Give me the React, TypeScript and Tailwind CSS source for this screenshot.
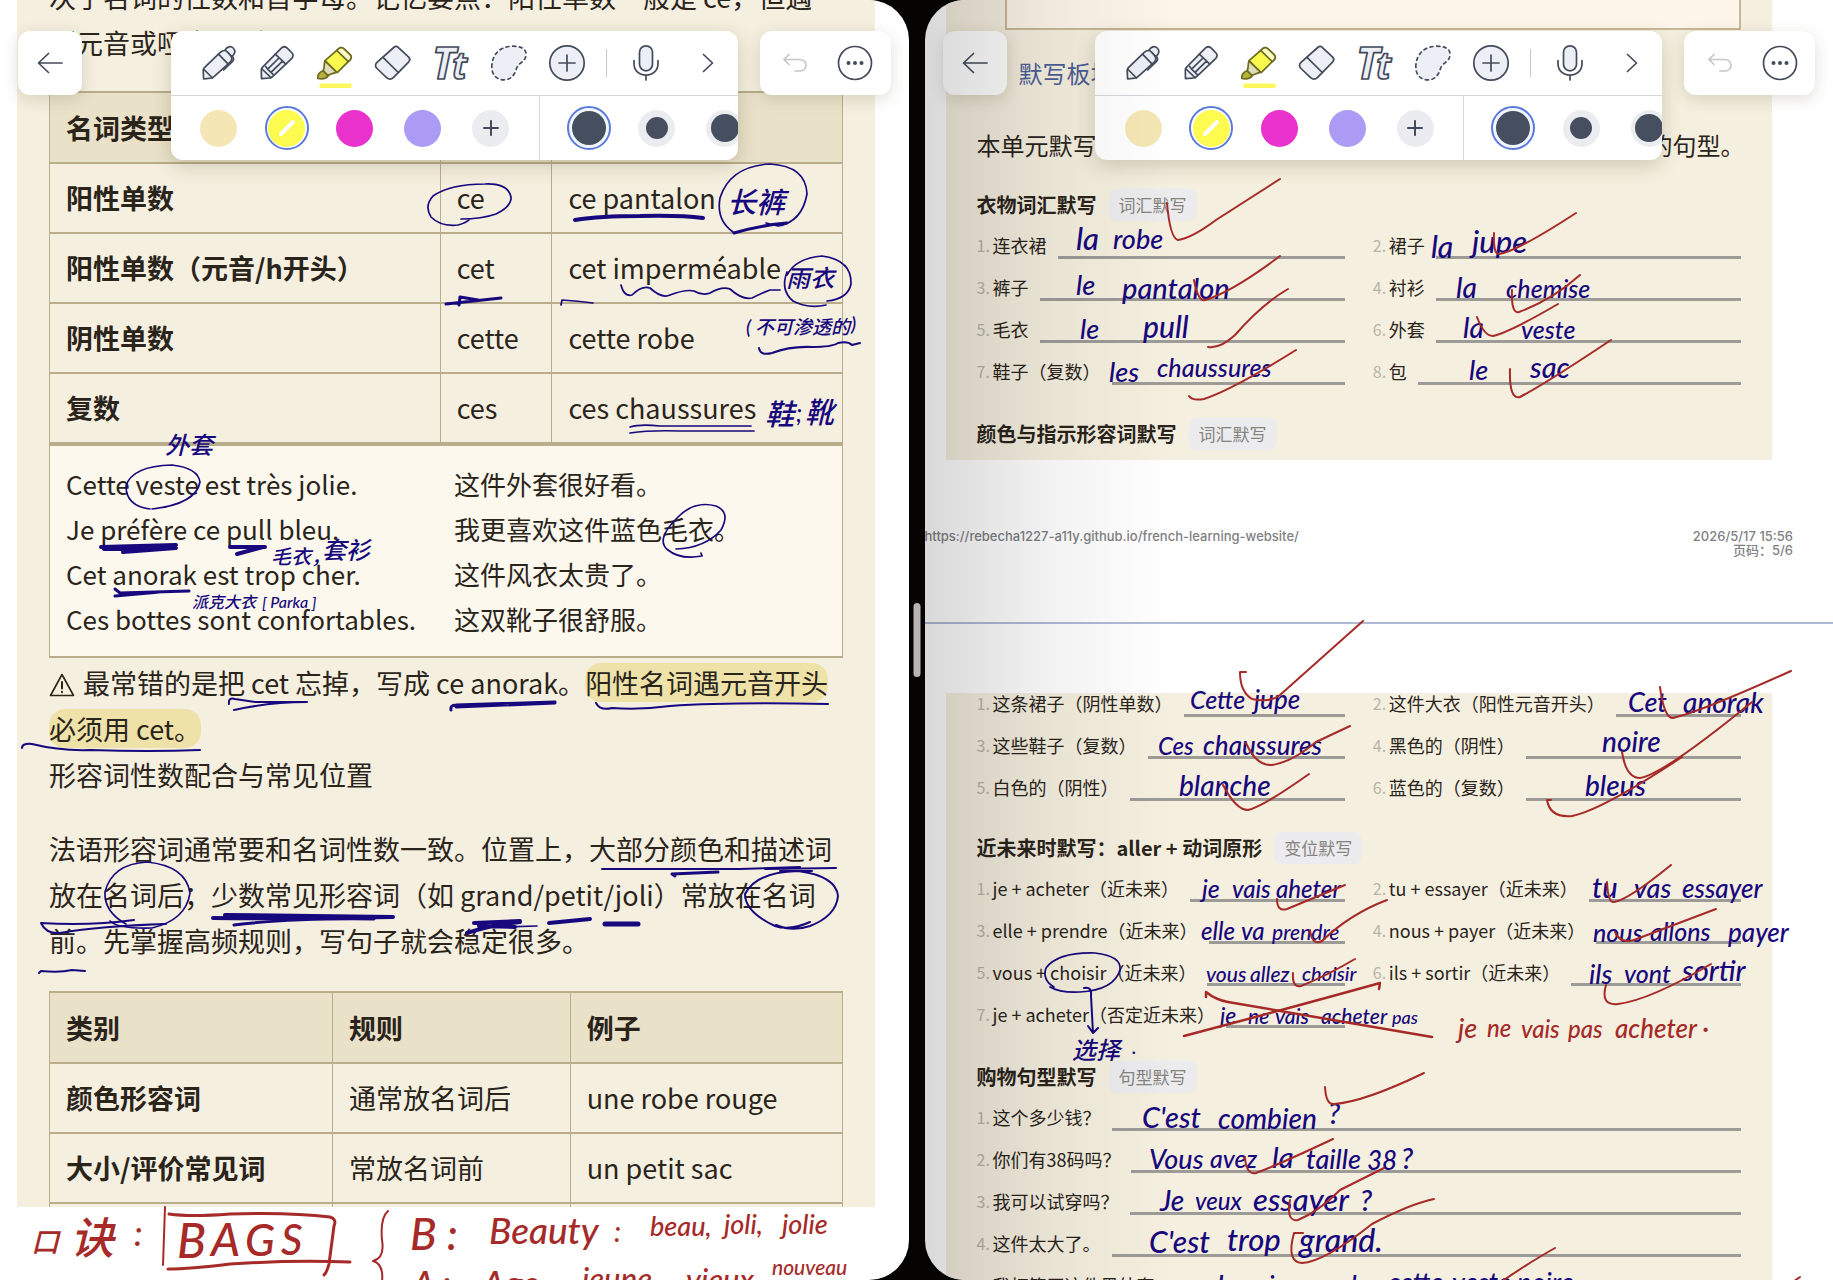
import React from 'react';

type Ink = 'blue' | 'red';

interface Stroke {
  d: string;
  width?: number;
  ink?: Ink;
}

interface Note {
  x: number;
  y: number;
  text: string;
  size?: number;
  ink?: Ink;
}

interface Question {
  label: string;
}

const inkColor = { blue: '#17087d', red: '#a52a28' };

const leftStrokes: Stroke[] = [
  { d: 'M461 219 Q482 219 496 214 Q512 206 511 197 Q508 183 485 184 Q450 184 433 196 Q424 206 431 217 Q441 227 458 225 Q466 223 470 219' },
  { d: 'M575 220 Q600 216 640 216 Q680 215 703 218', width: 4 },
  { d: 'M733 232 Q716 220 720 198 Q730 166 770 164 Q806 166 807 194 Q802 222 778 226 L766 223' },
  { d: 'M734 233 Q762 225 787 223', width: 3 },
  { d: 'M446 304 L501 298 M459 305 L460 297 L478 300', width: 3 },
  { d: 'M621 285 Q624 297 632 295 Q642 285 650 288 Q662 299 670 295 Q686 289 694 291 Q702 296 710 293 Q722 286 730 289 Q742 300 752 298 Q764 292 770 290 L780 290' },
  { d: 'M561 305 L562 300 Q578 301 593 303' },
  { d: 'M787 275 Q796 258 822 256 Q852 260 851 284 Q848 299 827 301 M787 272 Q780 290 793 301 Q808 309 826 305' },
  { d: 'M759 348 Q760 356 772 353 Q790 346 812 347 Q832 347 838 343 Q848 341 852 345 L860 343', width: 2 },
  { d: 'M630 427 Q640 424 660 426 L751 426 M630 433 Q650 430 680 431 L754 431' },
  { d: 'M150 509 Q126 506 126 486 Q132 466 172 465 Q198 468 200 482 Q196 504 152 509 L166 507' },
  { d: 'M101 547 L176 545 M104 549 L174 547 M123 552 L176 548', width: 4 },
  { d: 'M230 547 L265 547 M237 554 L263 547', width: 4 },
  { d: 'M115 589 L120 593 L189 591 M115 596 L160 592', width: 3 },
  { d: 'M676 549 Q705 548 721 530 Q731 512 716 506 Q694 500 677 518 Q655 540 668 550 Q680 560 702 556 L701 553' },
  { d: 'M229 704 Q228 697 235 699 L255 702 L307 702 Q270 702 234 710', width: 2 },
  { d: 'M451 710 Q450 705 456 705 L555 702 M456 707 L555 703', width: 3 },
  { d: 'M596 703 Q600 711 612 708 Q640 710 670 706 Q730 702 828 704', width: 2 },
  { d: 'M22 748 Q22 743 32 744 Q60 751 90 750 Q150 752 200 750', width: 2 },
  { d: 'M602 869 L740 869 L800 867 M765 869 L836 868 M780 871 L812 871', width: 2 },
  { d: 'M672 874 L675 876 M672 874 L718 872', width: 3 },
  { d: 'M126 924 Q104 912 105 892 Q112 864 147 862 Q186 866 190 893 Q186 920 152 928 Q118 929 110 921' },
  { d: 'M134 920 Q90 926 41 923 Q46 934 60 933 Q100 926 166 924 Q140 925 110 927', width: 2 },
  { d: 'M225 915 L393 917 M213 918 Q290 919 392 917', width: 4 },
  { d: 'M234 925 Q290 918 374 919', width: 3 },
  { d: 'M474 923 L520 921 M467 933 Q490 925 520 922 M479 926 L515 927', width: 4 },
  { d: 'M500 927 L537 926' },
  { d: 'M549 923 L590 919', width: 4 },
  { d: 'M605 924 L638 924', width: 5 },
  { d: 'M810 922 Q790 931 775 926 Q745 912 745 894 Q756 872 798 871 Q836 876 838 896 Q836 916 810 926 Q792 932 776 925', width: 2 },
  { d: 'M39 973 L41 971 Q60 973 72 970 L85 971', width: 2 },
  { d: 'M165 1207 L163 1265', width: 2, ink: 'red' },
  { d: 'M169 1214 Q190 1217 230 1214 Q290 1212 330 1217 Q337 1219 334 1226 L329 1264 Q327 1272 324 1275', width: 3, ink: 'red' },
  { d: 'M168 1269 Q190 1269 230 1264 Q290 1260 350 1262', width: 3, ink: 'red' },
  { d: 'M388 1211 Q380 1218 382 1240 Q385 1258 373 1261 Q384 1264 382 1282', width: 2, ink: 'red' },
];

const leftNotes: Note[] = [
  { x: 727, y: 213, text: '长裤', size: 29 },
  { x: 786, y: 287, text: '雨衣', size: 24 },
  { x: 746, y: 334, text: '(', size: 20 },
  { x: 755, y: 334, text: '不可渗透的', size: 19 },
  { x: 851, y: 331, text: ')', size: 20 },
  { x: 765, y: 425, text: '鞋', size: 29 },
  { x: 796, y: 422, text: ';', size: 24 },
  { x: 805, y: 423, text: '靴', size: 29 },
  { x: 165, y: 454, text: '外套', size: 24 },
  { x: 271, y: 564, text: '毛衣，', size: 20 },
  { x: 322, y: 559, text: '套衫', size: 24 },
  { x: 192, y: 608, text: '派克大衣', size: 16 },
  { x: 262, y: 608, text: '[ Parka ]', size: 16 },
  { x: 31, y: 1252, text: '口', size: 28, ink: 'red' },
  { x: 70, y: 1254, text: '诀', size: 44, ink: 'red' },
  { x: 134, y: 1246, text: ':', size: 34, ink: 'red' },
  { x: 177, y: 1258, text: 'B', size: 48, ink: 'red' },
  { x: 211, y: 1256, text: 'A', size: 46, ink: 'red' },
  { x: 245, y: 1256, text: 'G', size: 44, ink: 'red' },
  { x: 281, y: 1255, text: 'S', size: 42, ink: 'red' },
  { x: 410, y: 1250, text: 'B :', size: 44, ink: 'red' },
  { x: 489, y: 1244, text: 'Beauty', size: 37, ink: 'red' },
  { x: 614, y: 1242, text: ':', size: 28, ink: 'red' },
  { x: 650, y: 1236, text: 'beau,', size: 27, ink: 'red' },
  { x: 724, y: 1234, text: 'joli,', size: 27, ink: 'red' },
  { x: 782, y: 1234, text: 'jolie', size: 27, ink: 'red' },
  { x: 412, y: 1297, text: 'A :', size: 36, ink: 'red' },
  { x: 482, y: 1297, text: 'Age', size: 36, ink: 'red' },
  { x: 582, y: 1290, text: 'jeune', size: 31, ink: 'red' },
  { x: 686, y: 1291, text: 'vieux', size: 31, ink: 'red' },
  { x: 772, y: 1275, text: 'nouveau', size: 21, ink: 'red' },
];

const rightStrokes: Stroke[] = [
  { d: 'M1167 203 Q1170 238 1178 240 Q1192 238 1216 220 L1280 179', width: 2, ink: 'red' },
  { d: 'M1494 233 Q1493 254 1499 254 Q1516 252 1576 213', width: 2, ink: 'red' },
  { d: 'M1194 280 Q1198 302 1205 300 Q1232 292 1280 256', width: 2, ink: 'red' },
  { d: 'M1512 290 Q1511 314 1519 312 Q1552 300 1580 275', width: 2, ink: 'red' },
  { d: 'M1208 347 Q1220 349 1235 335 Q1262 304 1288 289', width: 2, ink: 'red' },
  { d: 'M1477 317 Q1484 336 1493 336 Q1510 332 1558 304', width: 2, ink: 'red' },
  { d: 'M1189 396 Q1192 401 1204 399 Q1232 390 1296 350', width: 2, ink: 'red' },
  { d: 'M1510 369 Q1509 400 1520 397 Q1545 384 1611 340', width: 2, ink: 'red' },
  { d: 'M1246 672 L1240 672 Q1240 692 1252 699 Q1270 703 1280 695 L1363 621', width: 2, ink: 'red' },
  { d: 'M1660 687 Q1664 718 1673 718 Q1700 712 1791 671', width: 2, ink: 'red' },
  { d: 'M1246 743 Q1256 766 1272 765 Q1292 762 1316 742 L1350 726', width: 2, ink: 'red' },
  { d: 'M1622 752 Q1626 778 1640 778 Q1664 774 1752 702', width: 2, ink: 'red' },
  { d: 'M1223 785 Q1236 810 1248 810 Q1264 806 1309 774', width: 2, ink: 'red' },
  { d: 'M1551 800 L1547 800 Q1550 818 1572 816 Q1602 810 1682 757', width: 2, ink: 'red' },
  { d: 'M1277 899 Q1277 912 1287 909 L1345 885', width: 2, ink: 'red' },
  { d: 'M1607 882 Q1608 903 1614 902 Q1628 900 1671 865', width: 2, ink: 'red' },
  { d: 'M1310 930 Q1312 946 1322 941 Q1350 914 1387 900', width: 2, ink: 'red' },
  { d: 'M1615 932 Q1620 944 1634 940 L1716 909', width: 2, ink: 'red' },
  { d: 'M1293 973 Q1292 988 1301 986 Q1326 976 1355 959', width: 2, ink: 'red' },
  { d: 'M1606 985 Q1600 1006 1618 1004 Q1650 1000 1711 964', width: 2, ink: 'red' },
  { d: 'M1184 1036 Q1290 1008 1380 983 L1379 989', width: 2.5, ink: 'red' },
  { d: 'M1206 997 L1206 992 Q1216 1000 1228 1002 L1432 1037', width: 2.5, ink: 'red' },
  { d: 'M1325 1087 Q1326 1105 1334 1104 Q1364 1102 1424 1073', width: 2, ink: 'red' },
  { d: 'M1245 1157 Q1246 1175 1256 1173 Q1280 1164 1333 1139', width: 2, ink: 'red' },
  { d: 'M1290 1200 Q1286 1222 1298 1220 Q1318 1212 1340 1190 L1384 1168', width: 2, ink: 'red' },
  { d: 'M1303 1233 L1294 1233 Q1286 1262 1302 1263 Q1324 1262 1372 1224 Q1410 1204 1434 1199', width: 2, ink: 'red' },
  { d: 'M1498 1284 Q1530 1262 1555 1248', width: 2, ink: 'red' },
  { d: 'M1790 1284 L1800 1277', width: 2, ink: 'red' },
  { d: 'M1054 987 Q1042 980 1046 968 Q1058 952 1095 953 Q1122 956 1120 970 Q1114 990 1080 992 Q1060 993 1050 987' },
  { d: 'M1084 988 Q1092 986 1091 996 L1093 1033 M1088 1026 L1093 1033 L1098 1028', width: 2 },
];

const rightNotes: Note[] = [
  { x: 1076, y: 250, text: 'la', size: 31 },
  { x: 1113, y: 249, text: 'robe', size: 27 },
  { x: 1431, y: 258, text: 'la', size: 30 },
  { x: 1472, y: 253, text: 'jupe', size: 31 },
  { x: 1076, y: 295, text: 'le', size: 27 },
  { x: 1122, y: 299, text: 'pantalon', size: 29 },
  { x: 1456, y: 298, text: 'la', size: 28 },
  { x: 1506, y: 298, text: 'chemise', size: 25 },
  { x: 1080, y: 339, text: 'le', size: 27 },
  { x: 1143, y: 338, text: 'pull', size: 30 },
  { x: 1463, y: 338, text: 'la', size: 28 },
  { x: 1521, y: 339, text: 'veste', size: 25 },
  { x: 1109, y: 382, text: 'les', size: 27 },
  { x: 1157, y: 377, text: 'chaussures', size: 25 },
  { x: 1469, y: 380, text: 'le', size: 27 },
  { x: 1530, y: 378, text: 'sac', size: 29 },
  { x: 1190, y: 709, text: 'Cette', size: 25 },
  { x: 1254, y: 709, text: 'jupe', size: 26 },
  { x: 1628, y: 712, text: 'Cet', size: 27 },
  { x: 1683, y: 713, text: 'anorak', size: 28 },
  { x: 1158, y: 755, text: 'Ces', size: 24 },
  { x: 1203, y: 755, text: 'chaussures', size: 26 },
  { x: 1602, y: 752, text: 'noire', size: 28 },
  { x: 1179, y: 796, text: 'blanche', size: 28 },
  { x: 1585, y: 796, text: 'bleus', size: 28 },
  { x: 1202, y: 898, text: 'je', size: 25 },
  { x: 1232, y: 898, text: 'vais', size: 24 },
  { x: 1276, y: 898, text: 'aheter', size: 24 },
  { x: 1592, y: 898, text: 'tu', size: 29 },
  { x: 1634, y: 898, text: 'vas', size: 27 },
  { x: 1682, y: 898, text: 'essayer', size: 26 },
  { x: 1201, y: 940, text: 'elle', size: 24 },
  { x: 1241, y: 940, text: 'va', size: 24 },
  { x: 1272, y: 940, text: 'prendre', size: 21 },
  { x: 1593, y: 942, text: 'nous', size: 25 },
  { x: 1650, y: 941, text: 'allons', size: 25 },
  { x: 1728, y: 942, text: 'payer', size: 26 },
  { x: 1206, y: 982, text: 'vous', size: 21 },
  { x: 1250, y: 982, text: 'allez', size: 21 },
  { x: 1302, y: 981, text: 'choisir', size: 20 },
  { x: 1589, y: 984, text: 'ils', size: 27 },
  { x: 1624, y: 983, text: 'vont', size: 25 },
  { x: 1682, y: 981, text: 'sortir', size: 29 },
  { x: 1220, y: 1024, text: 'je', size: 23 },
  { x: 1248, y: 1024, text: 'ne', size: 21 },
  { x: 1275, y: 1024, text: 'vais', size: 21 },
  { x: 1321, y: 1024, text: 'acheter', size: 21 },
  { x: 1392, y: 1024, text: 'pas', size: 18 },
  { x: 1458, y: 1038, text: 'je', size: 27, ink: 'red' },
  { x: 1487, y: 1037, text: 'ne', size: 24, ink: 'red' },
  { x: 1521, y: 1038, text: 'vais', size: 24, ink: 'red' },
  { x: 1568, y: 1038, text: 'pas', size: 24, ink: 'red' },
  { x: 1615, y: 1038, text: 'acheter ·', size: 26, ink: 'red' },
  { x: 1072, y: 1059, text: '选择', size: 24 },
  { x: 1132, y: 1054, text: '.', size: 20 },
  { x: 1142, y: 1128, text: "C'est", size: 29 },
  { x: 1218, y: 1129, text: 'combien', size: 28 },
  { x: 1328, y: 1124, text: '?', size: 29 },
  { x: 1149, y: 1169, text: 'Vous', size: 27 },
  { x: 1210, y: 1168, text: 'avez', size: 25 },
  { x: 1272, y: 1168, text: 'la', size: 29 },
  { x: 1306, y: 1169, text: 'taille', size: 27 },
  { x: 1367, y: 1170, text: '38', size: 26 },
  { x: 1401, y: 1169, text: '?', size: 29 },
  { x: 1160, y: 1211, text: 'Je', size: 28 },
  { x: 1195, y: 1210, text: 'veux', size: 24 },
  { x: 1253, y: 1211, text: 'essayer', size: 31 },
  { x: 1360, y: 1211, text: '?', size: 29 },
  { x: 1149, y: 1253, text: "C'est", size: 30 },
  { x: 1227, y: 1251, text: 'trop', size: 31 },
  { x: 1299, y: 1252, text: 'grand.', size: 32 },
  { x: 1213, y: 1295, text: 'Je vais prendre', size: 27 },
  { x: 1388, y: 1292, text: 'cette', size: 27 },
  { x: 1452, y: 1292, text: 'veste noire.', size: 27 },
];

const InkLayer: React.FC<{ originX: number; strokes: Stroke[]; notes: Note[] }> = ({ originX, strokes, notes }) => (
  <svg
    className="pointer-events-none absolute top-0 left-0"
    width={908}
    height={1280}
    viewBox={`${originX} 0 908 1280`}
    fill="none"
    strokeLinecap="round"
    strokeLinejoin="round"
  >
    {notes.map((n, i) => (
      <text
        key={`n${i}`}
        x={n.x}
        y={n.y}
        fontSize={n.size ?? 25}
        fill={inkColor[n.ink ?? 'blue']}
        className="font-['Lato','Noto_Sans_CJK_SC',sans-serif] font-medium italic"
      >
        {n.text}
      </text>
    ))}
    {strokes.map((s, i) => (
      <path key={`s${i}`} d={s.d} stroke={inkColor[s.ink ?? 'blue']} strokeWidth={s.width ?? 1.7} />
    ))}
  </svg>
);

/* ---------- toolbar icons, all on a 36px grid ---------- */

const Icon: React.FC<{ children: React.ReactNode }> = ({ children }) => (
  <svg
    className="size-9 overflow-visible"
    viewBox="0 0 36 36"
    fill="#eceff5"
    stroke="#434b5b"
    strokeWidth="1.7"
    strokeLinecap="round"
    strokeLinejoin="round"
  >
    {children}
  </svg>
);

const PenIcon = () => (
  <Icon>
    <path d="M24 5.2c2-3.6 5.6-4.6 8.2-2.2 2.8 2.6 2 6-1.6 8.6Z" />
    <path d="M2.6 34 2.2 25.5c0-1.3.4-2 1.2-2.8L19.5 7.2c2.6-2.3 5-2.3 7 0l3 3.2c2 2.4 1.900 4.400-.3 6.800L13 31.600c-1 .9-2 1.400-3.300 1.600Z" />
    <path d="M3 24.500 11.500 33M17.500 9.200l9.700 10" fill="none" />
    <path d="M31.500 11.500c1.600 2 1.400 3.600-.2 5.200L22.700 25" fill="none" />
  </Icon>
);

const PencilIcon = () => (
  <Icon>
    <path d="M2.500 33.700 2.300 25c0-1 .3-1.900 1.100-2.700L22.300 3.200c2-1.900 4.100-1.900 6 0l4.300 4.300c2 2 2 4.100 0 6.100L13.600 31.700c-.8.8-1.700 1.200-2.700 1.300Z" />
    <path d="M3 24l9 8.600M16.300 9.200l10.500 10M20 13 8.600 24.200M23.500 16.200 12 27.400M8.600 24.200l3.400 3.200M6.700 21.500l2 2.700M12 27.400l2.400 2.500" fill="none" />
  </Icon>
);

const HighlighterIcon = () => (
  <Icon>
    <path d="M.8 33.500c-.3-3.500 1.600-6.500 5.200-7.800l5.200 4.800c-1.700 3.300-5.600 3.800-10.400 3Z" fill="#b5b23c" stroke="#6d6b22" />
    <path d="M6.200 25.600C8 22 6.500 19.500 8 16l11.500 11c-3 2.200-6 1-8.400 3.600Z" fill="#dedcbc" stroke="#6d6b22" />
    <path d="M8 15.600 21.500 3.800c2-1.700 3.700-1.700 5.500 0l6 5.800c1.800 1.800 1.700 3.500 0 5.300L20.200 27.700Z" fill="#fafa4e" stroke="#6d6b22" />
    <path d="M21.500 3.800c2-1.700 3.700-1.700 5.500 0l6 5.800c1.800 1.800 1.700 3.500 0 5.300l-1.700 1.700L19.700 5.400Z" fill="#fdfdc4" stroke="#6d6b22" />
    <rect x="2.500" y="38.500" width="32" height="4.500" fill="#fbf75c" stroke="none" />
  </Icon>
);

const EraserIcon = () => (
  <Icon>
    <path d="M2 17.400 18.700 2.500c1.700-1.400 3.300-1.400 4.800.1l10.200 9.600c1.500 1.500 1.500 3 .1 4.600L18.600 32.300c-2.200 2.200-4.800 2.300-7 .3L2 23.500c-2-2-2-4.200 0-6.100Z" />
    <path d="m8 12.300 15.300 15.200" fill="none" />
  </Icon>
);

const TextIcon = () => (
  <Icon>
    <text x="-1" y="34" fontSize="44" strokeWidth="1.700" className="font-['Open_Sans',sans-serif] font-bold italic">
      T
    </text>
    <text x="19" y="34" fontSize="37" strokeWidth="1.700" className="font-['Open_Sans',sans-serif] font-bold italic">
      t
    </text>
  </Icon>
);

const LassoIcon = () => (
  <Icon>
    <path
      d="M.8 22C.8 9.500 9 1.200 22 1.200c8 0 13 2.500 13 8 0 7.800-7 7.800-9.500 14.300C23.500 30 20 34.800 13 34.800 5.500 34.800.8 30 .8 22Z"
      strokeDasharray="3 3.600"
    />
  </Icon>
);

const PlusIcon = () => (
  <Icon>
    <circle cx="18" cy="18" r="17.200" />
    <path d="M18 10v16M10 18h16" />
  </Icon>
);

const MicIcon = () => (
  <Icon>
    <rect x="11.500" y=".8" width="13" height="25" rx="6.500" />
    <path d="M6 15.500v3c0 7 5 11.700 12 11.700s12-4.700 12-11.700v-3M18 30.500v4.500" fill="none" />
  </Icon>
);

const ChevronIcon = () => (
  <Icon>
    <path d="m13.500 9.500 9 8.500-9 8.500" fill="none" />
  </Icon>
);

const BackIcon = () => (
  <Icon>
    <path d="M30 18H7M16.500 8.500 6.500 18l10 9.500" fill="none" />
  </Icon>
);

const UndoIcon = () => (
  <Icon>
    <path d="M12 9.500 7 14.500l5 5M7 14.500h15c4.500 0 7 2.400 7 5.700S26.500 26 22.500 26H18" fill="none" stroke="#c6c6cb" />
  </Icon>
);

const MoreIcon = () => (
  <Icon>
    <circle cx="18" cy="18" r="16.500" fill="#fff" />
    <g fill="#434b5b" stroke="none">
      <circle cx="11.500" cy="18" r="2" />
      <circle cx="18" cy="18" r="2" />
      <circle cx="24.500" cy="18" r="2" />
    </g>
  </Icon>
);

const tools = [
  { name: 'Pen', icon: PenIcon },
  { name: 'Pencil', icon: PencilIcon },
  { name: 'Highlighter', icon: HighlighterIcon },
  { name: 'Eraser', icon: EraserIcon },
  { name: 'Text', icon: TextIcon },
  { name: 'Lasso', icon: LassoIcon },
  { name: 'Insert', icon: PlusIcon },
];

const Toolbar: React.FC = () => (
  <header className="absolute inset-x-0 top-[31px] grid grid-cols-[1fr_567px_1fr] items-start px-[18px]">
    <button aria-label="Back" className="flex size-16 items-center justify-center rounded-xl bg-white shadow-[0_4px_16px_rgba(60,50,20,0.16)]">
      <BackIcon />
    </button>

    <div className="overflow-hidden rounded-xl bg-white shadow-[0_6px_20px_rgba(60,50,20,0.2)]">
      <div className="flex h-[65px] items-center border-b border-[#d5d5db] pl-[30px]">
        <div className="flex gap-[22px]">
          {tools.map(({ name, icon: ToolIcon }) => (
            <button key={name} aria-label={name}>
              <ToolIcon />
            </button>
          ))}
        </div>
        <div className="mx-[21px] h-7 w-px bg-[#c4c7ce]" />
        <div className="flex gap-[26px]">
          <button aria-label="Record">
            <MicIcon />
          </button>
          <button aria-label="More tools">
            <ChevronIcon />
          </button>
        </div>
      </div>

      <div className="flex h-16">
        <div className="flex w-[368px] shrink-0 items-center gap-6 pl-[26px]">
          <button aria-label="Cream" className="flex size-11 items-center justify-center">
            <span className="size-[37px] rounded-full bg-[#f5e7b5]" />
          </button>
          <button aria-label="Yellow" className="flex size-11 items-center justify-center rounded-full border-2 border-[#5c79dc]">
            <span className="flex size-[37px] items-center justify-center rounded-full bg-[#fdfb4f]">
              <svg className="size-5" viewBox="0 0 20 20" stroke="#fff" strokeWidth="4" strokeLinecap="round">
                <path d="M4 16 16 4" />
              </svg>
            </span>
          </button>
          <button aria-label="Magenta" className="flex size-11 items-center justify-center">
            <span className="size-[37px] rounded-full bg-[#e832cb]" />
          </button>
          <button aria-label="Lavender" className="flex size-11 items-center justify-center">
            <span className="size-[37px] rounded-full bg-[#ab9bf5]" />
          </button>
          <button aria-label="Add colour" className="flex size-11 items-center justify-center">
            <span className="flex size-[37px] items-center justify-center rounded-full bg-[#ebecef]">
              <svg className="size-4" viewBox="0 0 16 16" stroke="#434b5b" strokeWidth="2" strokeLinecap="round">
                <path d="M8 1v14M1 8h14" />
              </svg>
            </span>
          </button>
        </div>
        <div className="flex items-center gap-6 border-l border-[#d5d5db] pl-[27px]">
          <button aria-label="Thick" className="flex size-11 shrink-0 items-center justify-center rounded-full border-2 border-[#5c79dc] bg-[#f1f5fd]">
            <span className="size-[34px] rounded-full bg-[#454f5f]" />
          </button>
          <button aria-label="Thin" className="flex size-11 shrink-0 items-center justify-center">
            <span className="flex size-[37px] items-center justify-center rounded-full bg-[#ebecef]">
              <span className="size-[22px] rounded-full bg-[#454f5f]" />
            </span>
          </button>
          <button aria-label="Medium" className="flex size-11 shrink-0 items-center justify-center">
            <span className="flex size-[37px] items-center justify-center rounded-full bg-[#ebecef]">
              <span className="size-7 rounded-full bg-[#454f5f]" />
            </span>
          </button>
        </div>
      </div>
    </div>

    <div className="flex h-16 w-[131px] items-center justify-center gap-6 justify-self-end rounded-xl bg-white shadow-[0_4px_16px_rgba(60,50,20,0.16)]">
      <button aria-label="Undo">
        <UndoIcon />
      </button>
      <button aria-label="Options">
        <MoreIcon />
      </button>
    </div>
  </header>
);

/* ---------- left page ---------- */

const cell = 'border-x border-y-2 border-[#b9ad8c] pl-4 text-left';

const LeftPage: React.FC = () => (
  <main className="mr-[34px] ml-[17px] h-[1207px] overflow-hidden bg-[#f5efdf] px-8 text-[27px] leading-[46px] text-[#2a241b]">
    <p className="-mt-[26px]">
      次于名词的性数和首字母。记忆要点：阳性单数一般是 ce，但遇
      <br />
      到元音或哑音 h 时用 cet。
    </p>

    <table className="mt-[25px] w-full table-fixed border-collapse">
      <colgroup>
        <col className="w-[49.3%]" />
        <col className="w-[14.1%]" />
        <col />
      </colgroup>
      <thead>
        <tr className="h-[71px] bg-[#e9e1c8]">
          <th className={cell}>名词类型</th>
          <th className={cell}>形式</th>
          <th className={cell}>例子</th>
        </tr>
      </thead>
      <tbody>
        {[
          ['阳性单数', 'ce', 'ce pantalon'],
          ['阳性单数（元音/h开头）', 'cet', 'cet imperméable'],
          ['阴性单数', 'cette', 'cette robe'],
          ['复数', 'ces', 'ces chaussures'],
        ].map(([type, form, example]) => (
          <tr key={type} className="h-[70px]">
            <th className={cell}>{type}</th>
            <td className={cell}>{form}</td>
            <td className={cell}>{example}</td>
          </tr>
        ))}
      </tbody>
    </table>

    <dl className="grid grid-cols-[388px_1fr] border-x border-y-2 border-[#b9ad8c] bg-[#fcf8ed] pt-[15px] pr-4 pb-[15px] pl-4 text-[26px] leading-[45px]">
      <dt>Cette veste est très jolie.</dt>
      <dd>这件外套很好看。</dd>
      <dt>Je préfère ce pull bleu.</dt>
      <dd>我更喜欢这件蓝色毛衣。</dd>
      <dt>Cet anorak est trop cher.</dt>
      <dd>这件风衣太贵了。</dd>
      <dt>Ces bottes sont confortables.</dt>
      <dd>这双靴子很舒服。</dd>
    </dl>

    <p className="mt-[2px]">
      <svg className="mr-2 inline size-[26px] -translate-y-[2px]" viewBox="0 0 26 26" fill="none" stroke="#2a241b" strokeWidth="1.600" strokeLinejoin="round" strokeLinecap="round">
        <path d="M13 2.500 24.500 23.500h-23Z" />
        <path d="M13 10v6.500M13 19.800v.4" strokeWidth="2" />
      </svg>
      最常错的是把 cet 忘掉，写成 ce anorak。
      <mark className="rounded-2xl bg-[#efe2a9] box-decoration-clone text-inherit">阳性名词遇元音开头必须用 cet。</mark>
    </p>
    <p>形容词性数配合与常见位置</p>
    <p className="mt-7">
      法语形容词通常要和名词性数一致。位置上，大部分颜色和描述词放在名词后；少数常见形容词（如 grand/petit/joli）常放在名词前。先掌握高频规则，写句子就会稳定很多。
    </p>

    <table className="mt-[27px] w-full table-fixed border-collapse">
      <colgroup>
        <col className="w-[35.7%]" />
        <col className="w-[30%]" />
        <col />
      </colgroup>
      <thead>
        <tr className="h-[71px] bg-[#e9e1c8]">
          <th className={cell}>类别</th>
          <th className={cell}>规则</th>
          <th className={cell}>例子</th>
        </tr>
      </thead>
      <tbody>
        {[
          ['颜色形容词', '通常放名词后', 'une robe rouge'],
          ['大小/评价常见词', '常放名词前', 'un petit sac'],
          ['', '', ''],
        ].map(([kind, rule, example], i) => (
          <tr key={i} className="h-[70px]">
            <th className={cell}>{kind}</th>
            <td className={cell}>{rule}</td>
            <td className={cell}>{example}</td>
          </tr>
        ))}
      </tbody>
    </table>
  </main>
);

/* ---------- right page ---------- */

const SectionTitle: React.FC<{ title: string; tag: string }> = ({ title, tag }) => (
  <div className="flex h-8 items-center gap-3">
    <h3 className="text-[20px] leading-8 font-bold">{title}</h3>
    <span className="rounded-lg bg-[#ececee] px-[10px] text-[17px] leading-8 text-[#85837f]">{tag}</span>
  </div>
);

const QuestionList: React.FC<{ items: Question[]; single?: boolean }> = ({ items, single }) => (
  <ol className={single ? '-mt-1 grid grid-cols-1' : '-mt-1 grid grid-cols-2 gap-x-7'}>
    {items.map((q, i) => (
      <li key={q.label} className="flex h-[42px] items-end text-[18px] leading-[27px] whitespace-nowrap">
        <span className="w-4 shrink-0 text-[16px] text-[#b9b4a8]">{i + 1}.</span>
        <span>{q.label}</span>
        <span className="ml-[11px] h-7 flex-1 border-b-[3px] border-[#9c9b98]" />
      </li>
    ))}
  </ol>
);

const toQuestions = (...labels: string[]): Question[] => labels.map((label) => ({ label }));

const RightPage: React.FC = () => (
  <main className="text-[#2a241b]">
    <section className="mr-[61px] ml-[21px] h-[460px] overflow-hidden bg-[#f5efdf] px-[31px]">
      <div className="ml-7 h-[30px] border-x-2 border-b-2 border-[#c9b896] bg-[#fdf5e9]" />
      <h2 className="mt-[25px] ml-[42px] text-[24px] leading-9 text-[#4c6096]">默写板块</h2>
      <p className="mt-[34px] text-[24px] leading-10 whitespace-nowrap">本单元默写覆盖衣物、颜色、指示形容词、近未来时和购物场景的句型。</p>
      <div className="mt-6">
        <SectionTitle title="衣物词汇默写" tag="词汇默写" />
        <QuestionList items={toQuestions('连衣裙', '裙子', '裤子', '衬衫', '毛衣', '外套', '鞋子（复数）', '包')} />
      </div>
      <div className="mt-[33px]">
        <SectionTitle title="颜色与指示形容词默写" tag="词汇默写" />
      </div>
    </section>

    <footer className="mt-[69px] flex h-[95px] justify-between border-b-2 border-[#b1bad4] pr-10 font-['Inter','Noto_Sans_CJK_SC',sans-serif] text-[13px] leading-[14px] font-medium text-[#808083]">
      <span>https://rebecha1227-a11y.github.io/french-learning-website/</span>
      <span className="text-right">
        2026/5/17 15:56
        <br />
        页码：5/6
      </span>
    </footer>

    <section className="mt-[69px] mr-[61px] ml-[21px] flow-root bg-[#f5efdf] px-[31px]">
      <div className="-mt-[18px]">
        <QuestionList
          items={toQuestions('这条裙子（阴性单数）', '这件大衣（阳性元音开头）', '这些鞋子（复数）', '黑色的（阴性）', '白色的（阴性）', '蓝色的（复数）')}
        />
      </div>
      <div className="mt-[31px]">
        <SectionTitle title="近未来时默写：aller + 动词原形" tag="变位默写" />
        <QuestionList
          items={toQuestions(
            'je + acheter（近未来）',
            'tu + essayer（近未来）',
            'elle + prendre（近未来）',
            'nous + payer（近未来）',
            'vous + choisir（近未来）',
            'ils + sortir（近未来）',
            'je + acheter（否定近未来）',
          )}
        />
      </div>
      <div className="mt-[33px]">
        <SectionTitle title="购物句型默写" tag="句型默写" />
        <QuestionList
          single
          items={toQuestions('这个多少钱？', '你们有38码吗？', '我可以试穿吗？', '这件太大了。', '我打算买这件黑外套。')}
        />
      </div>
    </section>
  </main>
);

export default function App() {
  return (
    <div className="relative flex h-screen gap-4 overflow-hidden bg-[#060403] font-['Noto_Sans_CJK_SC',sans-serif]">
      <div className="relative flex-1 overflow-hidden rounded-r-[40px] bg-white">
        <LeftPage />
        <InkLayer originX={0} strokes={leftStrokes} notes={leftNotes} />
        <Toolbar />
      </div>

      <div className="relative flex-1 overflow-hidden rounded-l-[40px] bg-white">
        <RightPage />
        <InkLayer originX={925} strokes={rightStrokes} notes={rightNotes} />
        <Toolbar />
        {/* shade next to the split handle */}
        <div className="pointer-events-none absolute inset-y-0 left-0 w-[250px] bg-linear-to-r from-black/15 via-black/5 to-transparent" />
      </div>

      <div className="absolute top-1/2 left-1/2 h-[74px] w-[7px] -translate-x-1/2 -translate-y-1/2 rounded-full bg-[#b8b4b2]" />
    </div>
  );
}
